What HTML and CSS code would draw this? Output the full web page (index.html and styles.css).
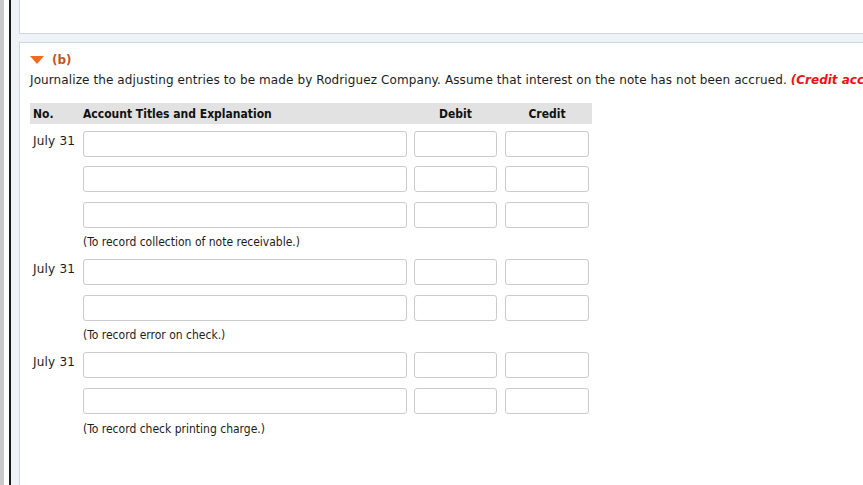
FILE: index.html
```html
<!DOCTYPE html>
<html>
<head>
<meta charset="utf-8">
<link rel="stylesheet" href="styles.css">
</head>
<body>
<div class="frame">
  <div class="edge-gray"></div>
  <div class="edge-white"></div>
  <div class="edge-black"></div>
  <div class="main">
    <div class="panel panel-top"></div>
    <div class="panel panel-b">
      <div class="part-head">
        <svg class="caret" width="14" height="9" viewBox="0 0 14 9"><polygon points="0,0 14,0 7,8" fill="#f26b1d"/></svg>
        <span class="part-label">(b)</span>
      </div>
      <p class="instructions">Journalize the adjusting entries to be made by Rodriguez Company. Assume that interest on the note has not been accrued. <em class="warn">(Credit account titles are automatically indented when amount is entered.)</em></p>

      <div class="journal">
        <div class="jhead">
          <div class="c-date">No.</div>
          <div class="c-acct">Account Titles and Explanation</div>
          <div class="c-amt">Debit</div>
          <div class="c-amt c-last">Credit</div>
        </div>

        <div class="jrow first">
          <div class="c-date date">July 31</div>
          <input class="c-acct field" type="text">
          <input class="c-amt field" type="text">
          <input class="c-amt c-last field" type="text">
        </div>
        <div class="jrow tight">
          <div class="c-date"></div>
          <input class="c-acct field" type="text">
          <input class="c-amt field" type="text">
          <input class="c-amt c-last field" type="text">
        </div>
        <div class="jrow">
          <div class="c-date"></div>
          <input class="c-acct field" type="text">
          <input class="c-amt field" type="text">
          <input class="c-amt c-last field" type="text">
        </div>
        <div class="note">(To record collection of note receivable.)</div>

        <div class="jrow">
          <div class="c-date date">July 31</div>
          <input class="c-acct field" type="text">
          <input class="c-amt field" type="text">
          <input class="c-amt c-last field" type="text">
        </div>
        <div class="jrow">
          <div class="c-date"></div>
          <input class="c-acct field" type="text">
          <input class="c-amt field" type="text">
          <input class="c-amt c-last field" type="text">
        </div>
        <div class="note">(To record error on check.)</div>

        <div class="jrow">
          <div class="c-date date">July 31</div>
          <input class="c-acct field" type="text">
          <input class="c-amt field" type="text">
          <input class="c-amt c-last field" type="text">
        </div>
        <div class="jrow">
          <div class="c-date"></div>
          <input class="c-acct field" type="text">
          <input class="c-amt field" type="text">
          <input class="c-amt c-last field" type="text">
        </div>
        <div class="note last-note">(To record check printing charge.)</div>
      </div>
    </div>
  </div>
</div>
</body>
</html>
```

FILE: styles.css
```css
html, body {
  margin: 0;
  padding: 0;
  background: #ffffff;
}
body {
  font-family: "DejaVu Sans", sans-serif;
  font-size: 12px;
  color: #1c1c1c;
  overflow: hidden;
}
.frame {
  display: flex;
  height: 485px;
  width: 863px;
  overflow: hidden;
}
.edge-gray {
  width: 4px;
  background: #c8c8c8;
  flex: none;
}
.edge-white {
  width: 5px;
  background: #ffffff;
  flex: none;
}
.edge-black {
  width: 2px;
  background: #1a1a1a;
  flex: none;
}
.main {
  flex: 1;
  background: #eff3f8;
  padding-left: 8px;
  display: flex;
  flex-direction: column;
  min-width: 0;
}
.panel {
  background: #ffffff;
  border-left: 1px solid #cdd6e1;
  margin-right: -2px;
}
.panel-top {
  height: 33px;
  border-bottom: 1px solid #cdd6e1;
  flex: none;
}
.panel-b {
  margin-top: 8px;
  border-top: 1px solid #cdd6e1;
  flex: 1;
  padding: 7px 0 0 10px;
  white-space: nowrap;
  overflow: hidden;
}
.part-head {
  display: flex;
  align-items: center;
  height: 20px;
}
.caret {
  display: block;
  margin-right: 8px;
  margin-top: 1px;
}
.part-label {
  font-weight: bold;
  font-size: 12px;
  color: #c4561c;
}
.instructions {
  margin: 0;
  line-height: 20px;
  height: 20px;
  letter-spacing: 0.1px;
}
.warn {
  color: #f01010;
  font-weight: bold;
  font-style: italic;
  letter-spacing: 0;
}
.journal {
  margin-top: 13px;
  width: 562px;
}
.jhead {
  display: flex;
  align-items: center;
  height: 21px;
  background: #e2e2e2;
  font-family: "DejaVu Sans Condensed", "DejaVu Sans", sans-serif;
  font-weight: bold;
  color: #111111;
  margin-bottom: 7px;
}
.c-date {
  width: 50px;
  padding-left: 3px;
  flex: none;
}
.c-acct {
  width: 324px;
  margin-right: 7px;
  flex: none;
}
.c-amt {
  width: 83px;
  margin-right: 8px;
  flex: none;
  text-align: center;
}
.c-last {
  width: 84px;
  margin-right: 0;
}
.jrow {
  display: flex;
  align-items: flex-start;
  margin-top: 10px;
}
.jrow.first {
  margin-top: 0;
}
.jrow.tight {
  margin-top: 9px;
}
.date {
  padding-top: 3px;
  line-height: 14px;
  letter-spacing: 0.2px;
}
.field {
  box-sizing: border-box;
  height: 26px;
  border: 1px solid #cbcbcb;
  border-radius: 3px;
  background: #ffffff;
  padding: 0 4px;
  font: inherit;
  outline: none;
}
.note {
  margin-left: 53px;
  font-family: "DejaVu Sans Condensed", "DejaVu Sans", sans-serif;
  font-size: 12px;
  line-height: 16px;
  margin-top: 6px;
  margin-bottom: -1px;
}
.note.last-note {
  margin-top: 7px;
}
```
